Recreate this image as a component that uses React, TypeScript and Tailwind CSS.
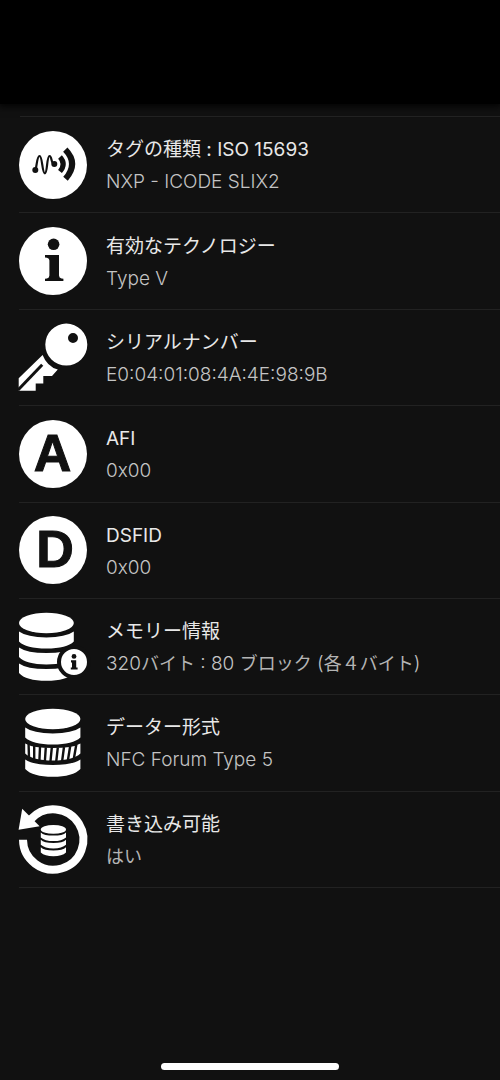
import React from 'react';

interface TagInfo {
  title: string;
  value: React.ReactNode;
  icon: React.ReactNode;
}

interface IconProps {
  children: React.ReactNode;
}

function Icon({ children }: IconProps) {
  return (
    <svg
      xmlns="http://www.w3.org/2000/svg"
      className="h-[68px] w-[68px] shrink-0 overflow-visible text-white"
      viewBox="0 0 68 68"
      fill="currentColor"
      aria-hidden="true"
    >
      {children}
    </svg>
  );
}

function LetterIcon({ letter, x }: { letter: string; x: number }) {
  return (
    <Icon>
      <circle cx="34" cy="34" r="34" />
      <text
        x={x}
        y="51"
        textAnchor="middle"
        className="fill-[#111111] stroke-[#111111] stroke-1 font-['Liberation_Sans',sans-serif] text-[52px] font-bold"
      >
        {letter}
      </text>
    </Icon>
  );
}

function SignalIcon() {
  return (
    <Icon>
      <circle cx="34" cy="34" r="34" />
      <g fill="none" stroke="#111111">
        <path
          strokeWidth="2.2"
          d="M16.5 39C18 34 18 25 20.6 25C23.5 25 23 42.3 25.9 42.3C28.6 42.3 27.6 25 30.6 25C33 25 32 33.5 35.5 33.5"
        />
        <path strokeWidth="5" d="M41 26Q47.4 33 41 40.5" />
        <path strokeWidth="6" d="M46.3 18.6Q59.8 32.5 46.5 47.8" />
      </g>
      <circle cx="16.3" cy="39" r="3" fill="#111111" />
      <circle cx="35.3" cy="33" r="3" fill="#111111" />
    </Icon>
  );
}

function InfoIcon() {
  return (
    <Icon>
      <circle cx="34" cy="34" r="34" />
      <circle cx="34.6" cy="17.3" r="5.8" fill="#111111" />
      <path
        fill="#111111"
        d="M26 28H40V48.5Q40 51 42.5 51.4L44.4 51.8V54H26V51.8L28 51.4Q30.4 51 30.4 48.5V33.6Q30.4 31.2 28 30.8L26 30.4Z"
      />
    </Icon>
  );
}

function KeyIcon() {
  return (
    <Icon>
      <path
        fillRule="evenodd"
        d="M47.3 0.6a21 21 0 1 1 0 42a21 21 0 1 1 0 -42ZM54 10a5 5 0 1 0 0 10a5 5 0 1 0 0 -10Z"
      />
      <path d="M23.6 32Q28 43.5 38.8 46.6L33 53H24.3V60.4H16.7V67.8H-0.3V55.3Z" />
      <path d="M-1 67L23.2 41.8" fill="none" stroke="#111111" strokeWidth="3" />
    </Icon>
  );
}

function MemoryIcon() {
  return (
    <Icon>
      <ellipse cx="27.4" cy="10" rx="27.4" ry="10.2" />
      <path d="M0 18.6Q8 24.4 27.4 24.4T54.8 18.6V28.4Q48 35.4 27.4 35.4T0 28.4Z" />
      <path d="M0 34.4Q8 40 27.4 40T54.8 34.4V44Q48 51.4 27.4 51.4T0 44Z" />
      <path d="M0 50.4Q8 56 27.4 56T54.8 50.4V60Q48 67.8 27.4 67.8T0 60Z" />
      <circle cx="55" cy="49" r="15" stroke="#111111" strokeWidth="4" />
      <circle cx="55" cy="43.4" r="2.4" fill="#111111" />
      <path fill="#111111" d="M52 47.2H57.2V54.4H58.6V56.6H51.8V54.4H53V49.4H52Z" />
    </Icon>
  );
}

function FormatIcon() {
  return (
    <Icon>
      <ellipse cx="33.8" cy="10" rx="27.6" ry="10.2" />
      <path d="M6.2 18.6Q14 24.4 33.8 24.4T61.4 18.6V28.4Q54 35.4 33.8 35.4T6.2 28.4Z" />
      <path d="M6.2 34.4Q14 39 33.8 39T61.4 34.4V44.4Q54 51.4 33.8 51.4T6.2 44.4Z" />
      <path
        fill="none"
        stroke="#111111"
        strokeWidth="2.4"
        d="M9.6 35L10 49M15.2 37L15.2 51M21 38L20.4 52M26.8 38.4L25.8 53M32.8 38.6L31.4 53M38.8 38.6L37.2 53M45 38L43 53M51.2 37L48.8 52M57.4 35L54.8 50"
      />
      <path d="M6.2 50.4Q14 56 33.8 56T61.4 50.4V60Q54 67.8 33.8 67.8T6.2 60Z" />
    </Icon>
  );
}

function WritableIcon() {
  return (
    <Icon>
      <path
        fill="none"
        stroke="currentColor"
        strokeWidth="8"
        d="M4 34.8A30.2 30.2 0 1 0 12 14"
      />
      <path d="M3.2 3.8L20.6 21.2L-0.4 24.8Z" />
      <ellipse cx="34.4" cy="24.4" rx="12.6" ry="4.4" />
      <path d="M21.8 27.4Q25 30.6 34.4 30.6T47 27.4V32.4Q43 36 34.4 36T21.8 32.4Z" />
      <path d="M21.8 34.8Q25 38 34.4 38T47 34.8V39.8Q43 43.4 34.4 43.4T21.8 39.8Z" />
      <path d="M21.8 42.2Q25 45.4 34.4 45.4T47 42.2V47.4Q43 51.2 34.4 51.2T21.8 47.4Z" />
    </Icon>
  );
}

// Kana in the value line is set a little smaller than the digits
function Kana({ children }: IconProps) {
  return <span className="text-[18px] font-normal text-[#b4b4b4]">{children}</span>;
}

const tagInfos: TagInfo[] = [
  {
    title: 'タグの種類 : ISO 15693',
    value: 'NXP - ICODE SLIX2',
    icon: <SignalIcon />,
  },
  {
    title: '有効なテクノロジー',
    value: 'Type V',
    icon: <InfoIcon />,
  },
  {
    title: 'シリアルナンバー',
    value: 'E0:04:01:08:4A:4E:98:9B',
    icon: <KeyIcon />,
  },
  {
    title: 'AFI',
    value: '0x00',
    icon: <LetterIcon letter="A" x={33.5} />,
  },
  {
    title: 'DSFID',
    value: '0x00',
    icon: <LetterIcon letter="D" x={36} />,
  },
  {
    title: 'メモリー情報',
    value: (
      <>
        320<Kana>バイト</Kana> : 80 <Kana>ブロック</Kana> (
        <Kana>各４バイト</Kana>)
      </>
    ),
    icon: <MemoryIcon />,
  },
  {
    title: 'データー形式',
    value: 'NFC Forum Type 5',
    icon: <FormatIcon />,
  },
  {
    title: '書き込み可能',
    value: <Kana>はい</Kana>,
    icon: <WritableIcon />,
  },
];

export default function App() {
  return (
    <div
      lang="ja"
      className="flex min-h-screen flex-col overflow-hidden bg-[#111111] font-['Inter','Noto_Sans_CJK_JP',sans-serif]"
    >
      <header className="h-[116px]">
        <div className="h-[104px] bg-black shadow-[0_0_8px_2px_#000000]" />
      </header>
      <ul className="ml-5 grid min-h-[772px] auto-rows-fr border-t border-[#222222]">
        {tagInfos.map((info) => (
          <li
            key={info.title}
            className="-ml-px flex items-center gap-[19px] border-b border-[#222222]"
          >
            {info.icon}
            <div className="min-w-0 pt-[3px] text-[19px] leading-8">
              <h2 className="text-[#e8e8e8]">{info.title}</h2>
              <p className="font-light text-[#c4c4c4]">{info.value}</p>
            </div>
          </li>
        ))}
      </ul>
      <div className="mx-auto mt-auto mb-2.5 h-[7px] w-[178px] rounded-full bg-white" />
    </div>
  );
}
